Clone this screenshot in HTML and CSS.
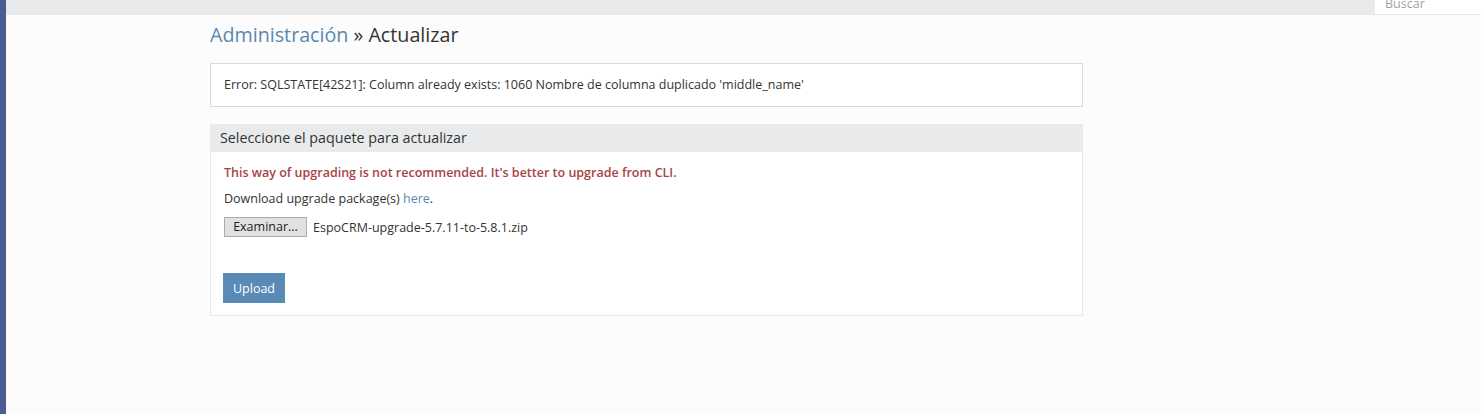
FILE: index.html
```html
<!DOCTYPE html>
<html lang="es">
<head>
    <meta charset="UTF-8">
    <meta name="viewport" content="width=device-width, initial-scale=1.0">
    <title>Actualizar</title>
    <link rel="stylesheet" href="styles.css">
</head>
<body>
    <div class="side"></div>
    <div class="main">
        <div class="navbar">
            <div class="search">
                <input type="text" placeholder="Buscar">
            </div>
        </div>
        <div class="page">
            <h1><a href="#">Administración</a> &raquo; Actualizar</h1>
            <div class="error">Error: SQLSTATE[42S21]: Column already exists: 1060 Nombre de columna duplicado 'middle_name'</div>
            <div class="panel">
                <div class="panel-head">Seleccione el paquete para actualizar</div>
                <div class="panel-body">
                    <p class="warn">This way of upgrading is not recommended. It's better to upgrade from CLI.</p>
                    <p>Download upgrade package(s) <a href="#">here</a>.</p>
                    <div class="file">
                        <span class="browse">Examinar...</span>
                        <span>EspoCRM-upgrade-5.7.11-to-5.8.1.zip</span>
                    </div>
                    <button class="upload">Upload</button>
                </div>
            </div>
        </div>
    </div>
</body>
</html>
```

FILE: styles.css
```css
body {
    margin: 0;
    height: 414px;
    display: flex;
    background: #fcfcfc;
    font-family: "Open Sans", "Liberation Sans", sans-serif;
    color: #333;
    overflow: hidden;
}
a {
    color: #5a87b0;
    text-decoration: none;
}
.side {
    width: 6px;
    background: #4a5d93;
}
.main {
    flex: 1;
    display: flex;
    flex-direction: column;
}
.navbar {
    height: 15px;
    background: #e8eaeb;
    display: flex;
    justify-content: flex-end;
}
.search {
    width: 106px;
    background: #fff;
    border-bottom: 1px solid #e6e6e6;
    overflow: hidden;
}
.search input {
    display: block;
    border: none;
    outline: none;
    background: transparent;
    font-family: inherit;
    font-size: 12.5px;
    padding: 0 10px;
    margin-top: -9px;
    height: 24px;
    width: 90px;
}
.search input::placeholder {
    color: #a3a3a3;
}
.page {
    padding-left: 204px;
    width: 873px;
}
h1 {
    margin: 0 0 14px;
    padding-top: 6px;
    font-size: 19.7px;
    font-weight: normal;
    line-height: 28px;
}
.error {
    background: #fff;
    border: 1px solid #e4d4d7;
    padding: 13px 13px;
    font-size: 12.5px;
    line-height: 16px;
    margin-bottom: 17px;
}
.panel {
    background: #fff;
    border: 1px solid #e6e6e6;
}
.panel-head {
    background: #e8eaeb;
    height: 28px;
    line-height: 28px;
    padding-left: 10px;
    font-size: 14.3px;
    margin: -1px -1px 0;
}
.panel-body {
    padding: 13px 13px 12px;
    font-size: 12.5px;
}
.panel-body p {
    margin: 0 0 10px;
    line-height: 16px;
}
.warn {
    color: #a94246;
    font-weight: 600;
}
.file {
    display: flex;
    align-items: center;
    gap: 6px;
    height: 20px;
}
.browse {
    box-sizing: border-box;
    width: 83px;
    height: 20px;
    line-height: 18px;
    text-align: center;
    background: #e1e1e1;
    border: 1px solid #adadad;
    color: #222;
}
.upload {
    display: block;
    margin: 36px 0 0 -1px;
    width: 62px;
    height: 30px;
    border: none;
    background: #5a8ab6;
    color: #fff;
    font-family: inherit;
    font-size: 12.5px;
    padding: 0;
}
```
